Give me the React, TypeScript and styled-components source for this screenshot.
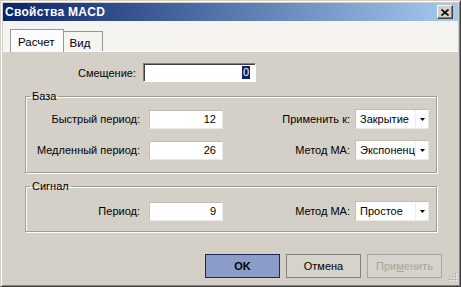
import { createGlobalStyle, styled } from "styled-components";

const GlobalStyle = createGlobalStyle`
	html, body {
		margin: 0;
		padding: 0;
		background: #d4d0c8;
	}
	body {
		font-family: "Liberation Sans", Arial, sans-serif;
		font-size: 11px;
		color: #000;
	}
	* {
		box-sizing: border-box;
	}
`;

function Combo({ value }: { value: string }) {
	return (
		<ComboBox>
			<ComboText>{value}</ComboText>
			<ComboArrow>
				<svg width="5" height="3" viewBox="0 0 5 3">
					<path d="M0 0h5L2.5 3z" fill="#000" />
				</svg>
			</ComboArrow>
		</ComboBox>
	);
}

export default function App() {
	return (
		<>
			<GlobalStyle />
			<Window>
				<TitleBar>
					<Title>Свойства MACD</Title>
					<CloseButton aria-label="Закрыть">
						<svg width="8" height="7" viewBox="0 0 8 7">
							<path d="M0.5 0.5l7 6M7.5 0.5l-7 6" stroke="#000" strokeWidth="1.6" />
						</svg>
					</CloseButton>
				</TitleBar>

				<TabStrip>
					<Tab $active>Расчет</Tab>
					<Tab>Вид</Tab>
				</TabStrip>

				<Page>
					<ShiftRow>
						<ShiftLabel>Смещение:</ShiftLabel>
						<ShiftInput>
							<Selected>0</Selected>
						</ShiftInput>
					</ShiftRow>

					<Group $top={6} $bottom={12}>
						<Legend>База</Legend>
						<Rows>
							<Row>
								<Label>Быстрый период:</Label>
								<NumberBox>12</NumberBox>
								<SideLabel>Применить к:</SideLabel>
								<Combo value="Закрытие" />
							</Row>
							<Row>
								<Label>Медленный период:</Label>
								<NumberBox>26</NumberBox>
								<SideLabel>Метод МА:</SideLabel>
								<Combo value="Экспоненциальное" />
							</Row>
						</Rows>
					</Group>

					<Group $top={8} $bottom={10} $gap={6}>
						<Legend>Сигнал</Legend>
						<Row>
							<Label>Период:</Label>
							<NumberBox>9</NumberBox>
							<SideLabel>Метод МА:</SideLabel>
							<Combo value="Простое" />
						</Row>
					</Group>

					<Buttons>
						<Button $variant="default">OK</Button>
						<Button>Отмена</Button>
						<Button $variant="disabled" disabled>
							При<u>м</u>енить
						</Button>
					</Buttons>
				</Page>

				<SizeGrip width="10" height="10" viewBox="0 0 10 10">
					{[
						[8, 0],
						[8, 3],
						[5, 3],
						[8, 6],
						[5, 6],
						[2, 6],
					].map(([x, y]) => (
						<g key={`${x}-${y}`}>
							<rect x={x + 1} y={y + 1} width="1" height="1" fill="#fff" />
							<rect x={x} y={y} width="1" height="1" fill="#9a968e" />
						</g>
					))}
				</SizeGrip>
			</Window>
		</>
	);
}

const Window = styled.div`
	position: relative;
	width: 461px;
	height: 287px;
	display: flex;
	flex-direction: column;
	background: #d4d0c8;
	border: 1px solid;
	border-color: #d4d0c8 #404040 #404040 #d4d0c8;
	box-shadow: inset 1px 1px 0 #fff, inset -1px -1px 0 #808080;
	padding: 2px;
`;

const TitleBar = styled.div`
	height: 18px;
	flex: none;
	display: flex;
	align-items: center;
	justify-content: space-between;
	padding: 0 5px 0 2px;
	background: linear-gradient(to right, #0a246a, #a6caf0);
`;

const Title = styled.span`
	font-weight: 700;
	font-size: 12px;
	color: #fff;
	letter-spacing: 0.3px;
`;

const CloseButton = styled.div`
	width: 16px;
	height: 14px;
	display: flex;
	align-items: center;
	justify-content: center;
	background: #d4d0c8;
	border: 1px solid;
	border-color: #fff #404040 #404040 #fff;
	box-shadow: inset -1px -1px 0 #808080;
`;

const TabStrip = styled.div`
	height: 31px;
	flex: none;
	display: flex;
	align-items: flex-end;
	padding-left: 7px;
	background: #f5f4f0;
	border-bottom: 1px solid #fff;
`;

const Tab = styled.div<{ $active?: boolean }>`
	position: relative;
	height: ${(p) => (p.$active ? "23px" : "20px")};
	margin-bottom: ${(p) => (p.$active ? "-1px" : "0")};
	padding: ${(p) => (p.$active ? "5px 8px 0 7px" : "4px 12px 0 6px")};
	background: ${(p) => (p.$active ? "#fcfcfe" : "#f4f4f0")};
	border: 1px solid #919b9c;
	border-bottom: none;
	border-left: ${(p) => (p.$active ? "1px solid #919b9c" : "none")};
	font-size: 11.5px;
	line-height: 14px;
	z-index: ${(p) => (p.$active ? 1 : 0)};
`;

const Page = styled.div`
	flex: 1;
	display: flex;
	flex-direction: column;
	padding: 11px 16px 6px 22px;
	background: #d4d0c8;
`;

const ShiftRow = styled.div`
	display: flex;
	align-items: center;
	height: 19px;
`;

const ShiftLabel = styled.span`
	width: 111px;
	margin-right: 7px;
	text-align: right;
`;

const ShiftInput = styled.div`
	width: 113px;
	height: 19px;
	display: flex;
	align-items: center;
	justify-content: flex-end;
	padding-right: 5px;
	background: #fff;
	border: 1px solid;
	border-color: #808080 #fff #fff #808080;
	box-shadow: inset 1px 1px 0 #404040;
`;

const Selected = styled.span`
	background: #0a246a;
	color: #fff;
	line-height: 13px;
	padding: 0 1px;
`;

const Group = styled.fieldset<{ $top: number; $bottom: number; $gap?: number }>`
	margin: ${(p) => p.$gap ?? 7}px 5px 0 0;
	padding: ${(p) => p.$top}px 7px ${(p) => p.$bottom}px 0;
	min-width: 0;
	border: 1px solid #a09c94;
	box-shadow: inset 1px 1px 0 #fff, 1px 1px 0 #fff;
`;

const Legend = styled.legend`
	margin-left: 4px;
	padding: 0 2px;
	line-height: 14px;
	font-size: 11px;
`;

const Rows = styled.div`
	display: flex;
	flex-direction: column;
	gap: 11px;
`;

const Row = styled.div`
	display: flex;
	align-items: center;
	height: 20px;
`;

const Label = styled.span`
	width: 114px;
	margin-right: 9px;
	text-align: right;
	white-space: nowrap;
`;

const NumberBox = styled.div`
	width: 74px;
	height: 19px;
	display: flex;
	align-items: center;
	justify-content: flex-end;
	padding-right: 6px;
	background: #fff;
	border: 1px solid;
	border-color: #c2beb6 #ebe9e4 #ebe9e4 #c2beb6;
`;

const SideLabel = styled.span`
	flex: 1;
	margin-right: 5px;
	text-align: right;
	white-space: nowrap;
`;

const ComboBox = styled.div`
	width: 74px;
	height: 20px;
	display: flex;
	align-items: center;
	background: #fff;
	border: 1px solid;
	border-color: #c2beb6 #ebe9e4 #ebe9e4 #c2beb6;
`;

const ComboText = styled.span`
	flex: 1;
	min-width: 0;
	padding-left: 4px;
	overflow: hidden;
	white-space: nowrap;
`;

const ComboArrow = styled.span`
	width: 13px;
	height: 100%;
	flex: none;
	display: flex;
	align-items: center;
	justify-content: center;
	border-left: 1px solid #eeede9;
`;

const Buttons = styled.div`
	margin-top: auto;
	display: flex;
	justify-content: flex-end;
	gap: 6px;
`;

const Button = styled.button<{ $variant?: "default" | "disabled" }>`
	width: 75px;
	height: 24px;
	padding: 0;
	font-family: "Liberation Sans", Arial, sans-serif;
	font-size: 11px;
	font-weight: ${(p) => (p.$variant === "default" ? 700 : 400)};
	color: ${(p) => (p.$variant === "disabled" ? "#a8a49c" : "#000")};
	background: ${(p) => (p.$variant === "default" ? "#8c9cc8" : "#d6d3cc")};
	border: 1px solid
		${(p) =>
			p.$variant === "default"
				? "#1c2858"
				: p.$variant === "disabled"
					? "#aaa69e"
					: "#85827c"};

	u {
		text-decoration-color: #a8a49c;
	}
`;

const SizeGrip = styled.svg`
	position: absolute;
	right: 3px;
	bottom: 3px;
`;
